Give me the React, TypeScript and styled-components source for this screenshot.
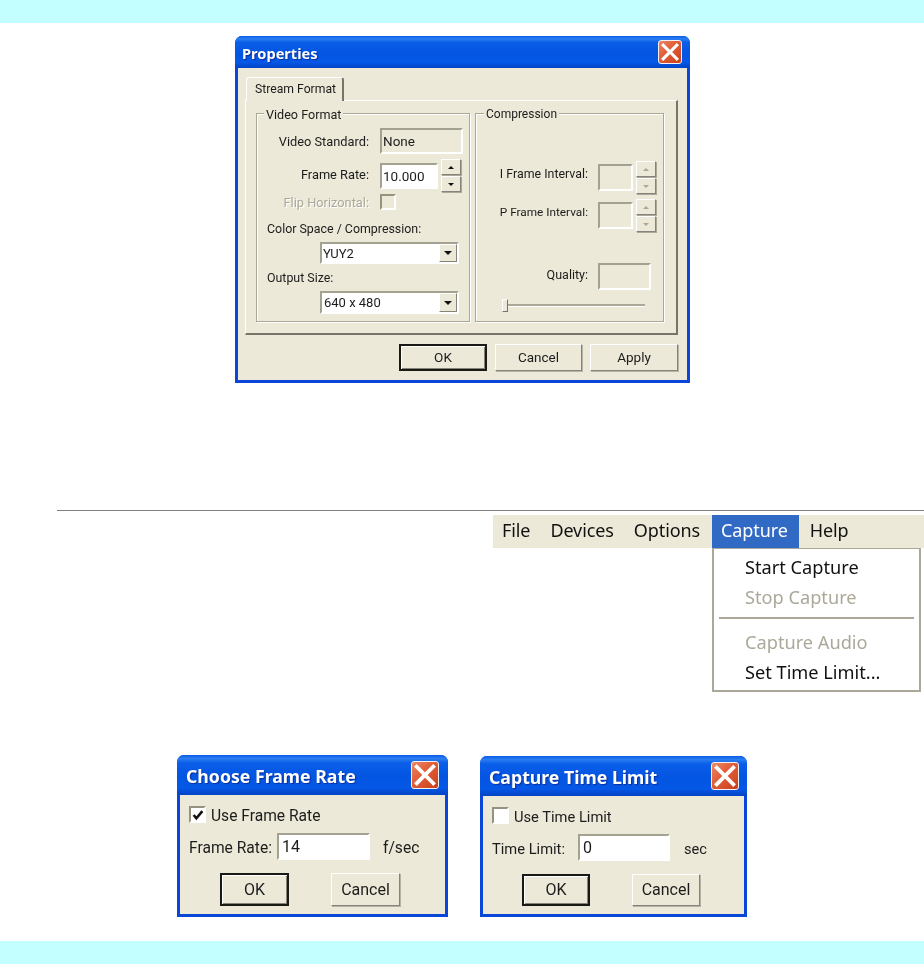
import React from "react";
import styled, { createGlobalStyle } from "styled-components";

const Global = createGlobalStyle`
  html, body { margin: 0; padding: 0; background: #fff; }
  body { font-family: Roboto, "Noto Sans", "Liberation Sans", sans-serif; color: #1c1c1c; }
`;

const Page = styled.div`
  width: 924px;
  height: 964px;
  overflow: hidden;
  display: flex;
  flex-direction: column;
  background: #fff;
`;

const Band = styled.div<{ $top?: number }>`
  height: 23px;
  flex: none;
  margin-top: ${(p) => p.$top ?? 0}px;
  background: #c4ffff;
`;

const Rule = styled.div`
  height: 1px;
  flex: none;
  margin: 127px 0 0 57px;
  background: #808080;
`;

const Win = styled.section<{ $w: number; $h: number }>`
  width: ${(p) => p.$w}px;
  height: ${(p) => p.$h}px;
  flex: none;
  box-sizing: border-box;
  display: flex;
  flex-direction: column;
  border-radius: 7px 7px 0 0;
  background: #0a47d8;
  padding: 0 3px 3px;
  filter: blur(0.35px);
`;

const TitleBar = styled.header<{ $h: number; $pl: number; $pr: number }>`
  height: ${(p) => p.$h}px;
  flex: none;
  margin: 0 -3px;
  padding: 0 ${(p) => p.$pr}px 0 ${(p) => p.$pl}px;
  border-radius: 7px 7px 0 0;
  display: flex;
  align-items: center;
  justify-content: space-between;
  background: linear-gradient(180deg, #0a5ce8 0%, #2b7df0 9%, #0a5ee8 20%, #0355e2 55%, #0558e6 82%, #0443c4 100%);
`;

const Title = styled.h1<{ $size: number }>`
  margin: 0;
  padding-top: 2px;
  font-family: "Noto Sans", sans-serif;
  font-size: ${(p) => p.$size}px;
  font-weight: 700;
  color: #fff;
  white-space: nowrap;
  text-shadow: 1px 1px 1px #0b2f9c;
`;

const Close = styled.span<{ $s: number }>`
  width: ${(p) => p.$s}px;
  height: ${(p) => p.$s}px;
  flex: none;
  box-sizing: border-box;
  border: 1px solid #f2f2f2;
  border-radius: 3px;
  display: flex;
  align-items: center;
  justify-content: center;
  background: linear-gradient(135deg, #ea8a68 0%, #e2603a 40%, #c8401c 100%);
`;

const CloseIcon = ({ size }: { size: number }) => (
  <Close $s={size}>
    <svg width={size - 6} height={size - 6} viewBox="0 0 16 16">
      <path d="M2 2 L14 14 M14 2 L2 14" stroke="#fff" strokeWidth="2.8" strokeLinecap="square" />
    </svg>
  </Close>
);

const Client = styled.div`
  flex: 1;
  min-height: 0;
  background: #ece9d8;
  display: flex;
  flex-direction: column;
`;

const TopWrap = styled.div`
  margin: 13px 0 0 235px;
  display: flex;
  flex: none;
`;

const Tab = styled.div`
  width: 98px;
  height: 24px;
  box-sizing: border-box;
  margin: 9px 0 -1px 8px;
  padding: 0 0 2px 8px;
  display: flex;
  align-items: center;
  font-size: 12.2px;
  white-space: nowrap;
  border: 1px solid #fff;
  border-bottom: none;
  border-right: 2px solid #77756a;
  border-radius: 3px 3px 0 0;
  position: relative;
  z-index: 1;
  background: #ece9d8;
`;

const TabPanel = styled.div`
  width: 433px;
  height: 235px;
  box-sizing: border-box;
  margin-left: 7px;
  padding: 12px 0 0 10px;
  border: 1px solid #fff;
  border-right: 2px solid #77756a;
  border-bottom: 2px solid #77756a;
  display: flex;
  gap: 5px;
`;

const Group = styled.div<{ $w: number }>`
  width: ${(p) => p.$w}px;
  height: 209px;
  flex: none;
  box-sizing: border-box;
  position: relative;
  border: 1px solid #a9a897;
  box-shadow: 1px 1px 0 #fff, inset 1px 1px 0 #fff;
  display: flex;
  flex-direction: column;
`;

const Legend = styled.span<{ $size: number; $left: number }>`
  position: absolute;
  top: -8px;
  left: ${(p) => p.$left}px;
  padding: 0 2px;
  font-size: ${(p) => p.$size}px;
  line-height: 17px;
  background: #ece9d8;
`;

const Row = styled.div<{ $top: number; $h: number }>`
  display: flex;
  align-items: center;
  flex: none;
  height: ${(p) => p.$h}px;
  margin-top: ${(p) => p.$top}px;
`;

const RightLabel = styled.span<{ $off?: boolean; $lift?: number; $size?: number }>`
  width: 112px;
  box-sizing: border-box;
  padding-bottom: ${(p) => p.$lift ?? 0}px;
  flex: none;
  text-align: right;
  font-size: ${(p) => p.$size ?? 12.8}px;
  white-space: nowrap;
  color: ${(p) => (p.$off ? "#aca899" : "#1c1c1c")};
  text-shadow: ${(p) => (p.$off ? "1px 1px 0 #fff" : "none")};
`;

const LeftLabel = styled.span`
  margin-left: 10px;
  padding-top: 1px;
  font-size: 12.4px;
  white-space: nowrap;
`;

const Field = styled.div<{ $w: number; $h: number; $off?: boolean; $left?: number; $size?: number; $pad?: number }>`
  width: ${(p) => p.$w}px;
  height: ${(p) => p.$h}px;
  margin-left: ${(p) => p.$left ?? 11}px;
  flex: none;
  box-sizing: border-box;
  border: 2px solid #fff;
  border-top-color: #a3a291;
  border-left-color: #a3a291;
  padding-left: ${(p) => p.$pad ?? 1}px;
  display: flex;
  align-items: center;
  background: ${(p) => (p.$off ? "#ece9d8" : "#fff")};
  font-size: ${(p) => p.$size ?? 13.5}px;
  overflow: hidden;
`;

const Spin = styled.div`
  margin-left: 3px;
  width: 20px;
  flex: none;
  display: flex;
  flex-direction: column;
  gap: 1px;
`;

const RaisedArrow = styled.span<{ $dir: "up" | "down"; $off?: boolean }>`
  height: 16px;
  box-sizing: border-box;
  border: 1px solid #fff;
  border-right-color: #85837a;
  border-bottom-color: #85837a;
  box-shadow: 1px 1px 0 #aca899;
  display: flex;
  align-items: center;
  justify-content: center;
  &::after {
    content: "";
    width: 0;
    height: 0;
    border-left: 3px solid transparent;
    border-right: 3px solid transparent;
    border-${(p) => (p.$dir === "up" ? "bottom" : "top")}: 3px solid ${(p) => (p.$off ? "#aca899" : "#111")};
  }
`;

const Spinner = ({ off }: { off?: boolean }) => (
  <Spin>
    <RaisedArrow $dir="up" $off={off} />
    <RaisedArrow $dir="down" $off={off} />
  </Spin>
);

const Check = styled.span<{ $s: number; $off?: boolean; $left?: number }>`
  width: ${(p) => p.$s}px;
  height: ${(p) => p.$s}px;
  margin-left: ${(p) => p.$left ?? 0}px;
  flex: none;
  box-sizing: border-box;
  border: 2px solid #fff;
  border-top-color: #94937f;
  border-left-color: #94937f;
  background: ${(p) => (p.$off ? "#ece9d8" : "#fff")};
  display: flex;
  align-items: center;
  justify-content: center;
`;

const Select = styled.div<{ $h: number; $top: number; $pad: number }>`
  width: 139px;
  height: ${(p) => p.$h}px;
  margin: ${(p) => p.$top}px 0 0 63px;
  flex: none;
  box-sizing: border-box;
  border: 2px solid #fff;
  border-top-color: #a3a291;
  border-left-color: #a3a291;
  background: #fff;
  display: flex;
  align-items: center;
  justify-content: space-between;
  font-size: 13px;
  padding-left: ${(p) => p.$pad}px;
`;

const SelectBtn = styled.span`
  width: 18px;
  height: 100%;
  flex: none;
  box-sizing: border-box;
  background: #ece9d8;
  border: 1px solid #fff;
  border-right-color: #85837a;
  border-bottom-color: #85837a;
  display: flex;
  align-items: center;
  justify-content: center;
  &::after {
    content: "";
    width: 0;
    height: 0;
    border-left: 4px solid transparent;
    border-right: 4px solid transparent;
    border-top: 4px solid #111;
  }
`;

const Slider = styled.div`
  margin: 9px 0 0 26px;
  width: 143px;
  height: 13px;
  flex: none;
  position: relative;
  display: flex;
  align-items: center;
`;

const Track = styled.span`
  flex: 1;
  height: 2px;
  background: #aca899;
  border-bottom: 1px solid #fff;
`;

const Thumb = styled.span`
  position: absolute;
  left: 0;
  top: 0;
  width: 6px;
  height: 13px;
  box-sizing: border-box;
  background: #ece9d8;
  border: 1px solid #fff;
  border-right-color: #77756a;
  border-bottom-color: #77756a;
`;

const ButtonRow = styled.div<{ $top: number; $left: number; $gap: number }>`
  display: flex;
  gap: ${(p) => p.$gap}px;
  margin: ${(p) => p.$top}px 0 0 ${(p) => p.$left}px;
  flex: none;
`;

const Btn = styled.span<{ $w: number; $h: number; $def?: boolean; $size: number }>`
  width: ${(p) => p.$w}px;
  height: ${(p) => p.$h}px;
  box-sizing: border-box;
  padding-bottom: 1px;
  display: flex;
  align-items: center;
  justify-content: center;
  font-size: ${(p) => p.$size}px;
  border: ${(p) => (p.$def ? "2px solid #1a1a14" : "1px solid #fff")};
  ${(p) =>
    p.$def
      ? "box-shadow: inset 1px 1px 0 #fff, inset -1px -1px 0 #85837a;"
      : "border-right-color: #85837a; border-bottom-color: #85837a; box-shadow: 1px 1px 0 #b5b3a5;"}
`;

const MenuWrap = styled.div`
  margin: 4px 0 0 493px;
  flex: none;
  display: flex;
  flex-direction: column;
`;

const MenuBar = styled.nav`
  height: 33px;
  background: #ece9d8;
  display: flex;
  gap: 2px;
`;

const MenuItem = styled.span<{ $on?: boolean }>`
  padding: 0 ${(p) => (p.$on ? 11 : 9)}px 3px 9px;
  margin-left: ${(p) => (p.$on ? 1 : 0)}px;
  display: flex;
  align-items: center;
  font-family: "Noto Sans", sans-serif;
  font-size: 18px;
  letter-spacing: -0.1px;
  background: ${(p) => (p.$on ? "#316ac5" : "transparent")};
  color: ${(p) => (p.$on ? "#fff" : "#111")};
  filter: blur(0.3px);
`;

const Dropdown = styled.div`
  margin-left: 219px;
  width: 209px;
  height: 144px;
  box-sizing: border-box;
  border: 2px solid #aca899;
  border-top-width: 1px;
  padding-top: 3px;
  background: #fff;
  display: flex;
  flex-direction: column;
`;

const DropItem = styled.div<{ $off?: boolean }>`
  height: 30px;
  flex: none;
  padding: 0 0 1px 31px;
  box-sizing: border-box;
  display: flex;
  align-items: center;
  font-family: "Noto Sans", sans-serif;
  font-size: 18.2px;
  color: ${(p) => (p.$off ? "#aca899" : "#111")};
  filter: blur(0.3px);
`;

const Sep = styled.div`
  height: 2px;
  flex: none;
  margin: 5px 5px 8px;
  background: #aca899;
`;

const DialogRow = styled.div`
  margin: 63px 0 0 177px;
  display: flex;
  align-items: flex-end;
  gap: 32px;
  flex: none;
`;

const SmallRow = styled.div<{ $top: number; $h: number; $left: number; $size: number }>`
  display: flex;
  align-items: center;
  height: ${(p) => p.$h}px;
  margin: ${(p) => p.$top}px 0 0 ${(p) => p.$left}px;
  flex: none;
  font-size: ${(p) => p.$size}px;
`;

const SmallLabel = styled.span<{ $w: number }>`
  width: ${(p) => p.$w}px;
  padding-top: 2px;
  flex: none;
  white-space: nowrap;
`;

const Unit = styled.span<{ $left: number }>`
  margin-left: ${(p) => p.$left}px;
  padding-top: 2px;
  white-space: nowrap;
`;

const CheckText = styled.span`
  margin-left: 5px;
  padding-top: 2px;
  white-space: nowrap;
`;

const Tick = () => (
  <svg width="12" height="12" viewBox="0 0 11 11">
    <path d="M1.5 5.5 L4 8.5 L9.5 2" fill="none" stroke="#111" strokeWidth="2.4" />
  </svg>
);

export default function App() {
  return (
    <Page>
      <Global />
      <Band />
      <TopWrap>
        <Win $w={455} $h={347}>
          <TitleBar $h={32} $pl={7} $pr={8}>
            <Title $size={14.6}>Properties</Title>
            <CloseIcon size={24} />
          </TitleBar>
          <Client>
            <Tab>Stream Format</Tab>
            <TabPanel>
              <Group $w={214}>
                <Legend $size={12.6} $left={7}>Video Format</Legend>
                <Row $top={14} $h={26}>
                  <RightLabel>Video Standard:</RightLabel>
                  <Field $w={83} $h={26} $off>None</Field>
                </Row>
                <Row $top={5} $h={33}>
                  <RightLabel $lift={3}>Frame Rate:</RightLabel>
                  <Field $w={58} $h={26}>10.000</Field>
                  <Spinner />
                </Row>
                <Row $top={2} $h={16}>
                  <RightLabel $off>Flip Horizontal:</RightLabel>
                  <Check $s={16} $off $left={11} />
                </Row>
                <Row $top={10} $h={16}>
                  <LeftLabel>Color Space / Compression:</LeftLabel>
                </Row>
                <Select $h={22} $top={6} $pad={1}>
                  YUY2
                  <SelectBtn />
                </Select>
                <Row $top={5} $h={16}>
                  <LeftLabel>Output Size:</LeftLabel>
                </Row>
                <Select $h={23} $top={6} $pad={2}>
                  640 x 480
                  <SelectBtn />
                </Select>
              </Group>
              <Group $w={189}>
                <Legend $size={12} $left={8}>Compression</Legend>
                <Row $top={47} $h={33}>
                  <RightLabel $lift={8} $size={12.4}>I Frame Interval:</RightLabel>
                  <Field $w={35} $h={27} $off $left={10} />
                  <Spinner off />
                </Row>
                <Row $top={5} $h={33}>
                  <RightLabel $lift={8} $size={11.8}>P Frame Interval:</RightLabel>
                  <Field $w={35} $h={27} $off $left={10} />
                  <Spinner off />
                </Row>
                <Row $top={31} $h={27}>
                  <RightLabel $lift={4} $size={12.5}>Quality:</RightLabel>
                  <Field $w={53} $h={27} $off $left={10} />
                </Row>
                <Slider>
                  <Track />
                  <Thumb />
                </Slider>
              </Group>
            </TabPanel>
            <ButtonRow $top={9} $left={161} $gap={8}>
              <Btn $w={88} $h={27} $def $size={13.5}>OK</Btn>
              <Btn $w={87} $h={27} $size={13.5}>Cancel</Btn>
              <Btn $w={88} $h={27} $size={13.5}>Apply</Btn>
            </ButtonRow>
          </Client>
        </Win>
      </TopWrap>
      <Rule />
      <MenuWrap>
        <MenuBar>
          <MenuItem>File</MenuItem>
          <MenuItem>Devices</MenuItem>
          <MenuItem>Options</MenuItem>
          <MenuItem $on>Capture</MenuItem>
          <MenuItem>Help</MenuItem>
        </MenuBar>
        <Dropdown>
          <DropItem>Start Capture</DropItem>
          <DropItem $off>Stop Capture</DropItem>
          <Sep />
          <DropItem $off>Capture Audio</DropItem>
          <DropItem>Set Time Limit...</DropItem>
        </Dropdown>
      </MenuWrap>
      <DialogRow>
        <Win $w={271} $h={162}>
          <TitleBar $h={40} $pl={9} $pr={9}>
            <Title $size={17.7}>Choose Frame Rate</Title>
            <CloseIcon size={28} />
          </TitleBar>
          <Client>
            <SmallRow $top={11} $h={17} $left={9} $size={15.6}>
              <Check $s={17}><Tick /></Check>
              <CheckText>Use Frame Rate</CheckText>
            </SmallRow>
            <SmallRow $top={10} $h={27} $left={9} $size={15.6}>
              <SmallLabel $w={88}>Frame Rate:</SmallLabel>
              <Field $w={93} $h={27} $left={0} $size={16} $pad={3}>14</Field>
              <Unit $left={13}>f/sec</Unit>
            </SmallRow>
            <ButtonRow $top={13} $left={40} $gap={42}>
              <Btn $w={69} $h={33} $def $size={16}>OK</Btn>
              <Btn $w={69} $h={33} $size={16}>Cancel</Btn>
            </ButtonRow>
          </Client>
        </Win>
        <Win $w={267} $h={161}>
          <TitleBar $h={40} $pl={9} $pr={8}>
            <Title $size={17.7}>Capture Time Limit</Title>
            <CloseIcon size={28} />
          </TitleBar>
          <Client>
            <SmallRow $top={11} $h={17} $left={9} $size={14.7}>
              <Check $s={17} />
              <CheckText>Use Time Limit</CheckText>
            </SmallRow>
            <SmallRow $top={10} $h={27} $left={9} $size={14.7}>
              <SmallLabel $w={86}>Time Limit:</SmallLabel>
              <Field $w={92} $h={27} $left={0} $size={16} $pad={3}>0</Field>
              <Unit $left={14}>sec</Unit>
            </SmallRow>
            <ButtonRow $top={13} $left={39} $gap={42}>
              <Btn $w={68} $h={32} $def $size={16}>OK</Btn>
              <Btn $w={68} $h={32} $size={16}>Cancel</Btn>
            </ButtonRow>
          </Client>
        </Win>
      </DialogRow>
      <Band $top={24} />
    </Page>
  );
}
